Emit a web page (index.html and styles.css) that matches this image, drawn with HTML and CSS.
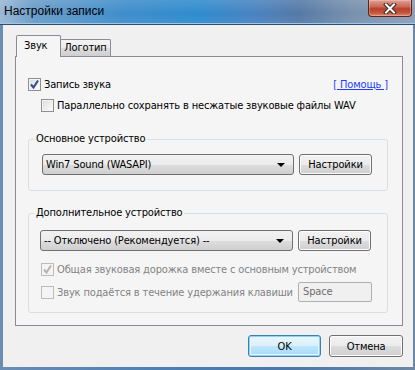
FILE: index.html
```html
<!DOCTYPE html>
<html lang="ru">
<head>
    <meta charset="UTF-8">
    <title>Настройки записи</title>
    <link rel="stylesheet" href="styles.css">
</head>
<body>
    <div class="window">
        <div class="titlebar">
            <span class="title">Настройки записи</span>
            <span class="close-btn">
                <svg width="16" height="11" viewBox="0 0 16 11">
                    <path d="M4 1.5 L12 9.5 M12 1.5 L4 9.5" stroke="#3a2a2a" stroke-width="4" stroke-linecap="square" fill="none"/>
                    <path d="M4 1.5 L12 9.5 M12 1.5 L4 9.5" stroke="#ffffff" stroke-width="2" stroke-linecap="square" fill="none"/>
                </svg>
            </span>
        </div>

        <div class="client">
            <div class="tabs">
                <div class="tab active">Звук</div>
                <div class="tab">Логотип</div>
            </div>

            <div class="panel">
                <div class="row main-row">
                    <label class="check">
                        <span class="cb">
                            <svg width="11" height="11" viewBox="0 0 11 11"><path d="M2 5.5 L4.5 8.5 L9 1.5" stroke="#2a4c8f" stroke-width="2" fill="none"/></svg>
                        </span>
                        Запись звука
                    </label>
                    <a class="help" href="#">[ Помощь ]</a>
                </div>
                <div class="row sub-row">
                    <label class="check"><span class="cb"></span>Параллельно сохранять в несжатые звуковые файлы WAV</label>
                </div>

                <fieldset class="group first">
                    <legend>Основное устройство</legend>
                    <div class="group-body">
                        <div class="combo"><span>Win7 Sound (WASAPI)</span><span class="arrow"></span></div>
                        <button class="btn">Настройки</button>
                    </div>
                </fieldset>

                <fieldset class="group second">
                    <legend>Дополнительное устройство</legend>
                    <div class="group-body">
                        <div class="combo"><span>-- Отключено (Рекомендуется) --</span><span class="arrow"></span></div>
                        <button class="btn">Настройки</button>
                        <label class="check disabled wide">
                            <span class="cb">
                                <svg width="11" height="11" viewBox="0 0 11 11"><path d="M2 5.5 L4.5 8.5 L9 1.5" stroke="#b4b4b4" stroke-width="2" fill="none"/></svg>
                            </span>
                            Общая звуковая дорожка вместе с основным устройством
                        </label>
                        <label class="check disabled"><span class="cb"></span>Звук подаётся в течение удержания клавиши</label>
                        <div class="keybox">Space</div>
                    </div>
                </fieldset>
            </div>

            <div class="footer">
                <button class="btn ok">OK</button>
                <button class="btn cancel">Отмена</button>
            </div>
        </div>
    </div>
</body>
</html>
```

FILE: styles.css
```css
* {
    margin: 0;
    padding: 0;
    box-sizing: border-box;
}

body {
    font-family: 'DejaVu Sans Condensed', 'DejaVu Sans', sans-serif;
    font-stretch: condensed;
    font-size: 11px;
    letter-spacing: -0.15px;
    color: #000;
    background: #6f8fb3;
    width: 415px;
    height: 370px;
    overflow: hidden;
}

.window {
    width: 415px;
    height: 370px;
    display: flex;
    flex-direction: column;
    background: linear-gradient(90deg, #6a8db4 0%, #4d7fb4 40%, #4b78a8 70%, #6e87a4 100%);
}

.titlebar {
    height: 25px;
    display: flex;
    justify-content: space-between;
    align-items: flex-start;
    background:
        linear-gradient(180deg, rgba(255, 255, 255, 0.12) 0%, rgba(255, 255, 255, 0) 55%, rgba(255, 255, 255, 0.06) 100%),
        linear-gradient(90deg, #9bb8d4 0%, #6a9dc9 8%, #3f8dcb 30%, #2f8ccd 48%, #4a82c0 62%, #5579a6 72%, #7890ad 85%, #8c9fb6 100%);
    border-bottom: 1px solid #2f4d6e;
    box-shadow: inset 0 -1px 0 #9cc8ea;
}

.title {
    font-family: 'Liberation Sans', Arial, sans-serif;
    font-stretch: normal;
    letter-spacing: 0;
    font-size: 12px;
    line-height: 23px;
    padding-left: 4px;
}

.close-btn {
    width: 44px;
    height: 17px;
    margin-right: 3px;
    display: flex;
    align-items: center;
    justify-content: center;
    border: 1px solid #5c2520;
    border-top: none;
    border-radius: 0 0 4px 4px;
    background: linear-gradient(180deg, #e0a094 0%, #cc6a58 40%, #b8412c 55%, #c5543c 80%, #dd8a6c 100%);
    box-shadow: inset 0 0 0 1px rgba(255, 255, 255, 0.25);
}

.client {
    flex: 1;
    margin: 0 2px 3px 3px;
    background: #f0f0f0;
    display: flex;
    flex-direction: column;
}

.tabs {
    display: flex;
    align-items: flex-end;
    height: 31px;
    padding-left: 13px;
}

.tab {
    border: 1px solid #898c95;
    border-bottom: none;
    border-radius: 2px 2px 0 0;
    height: 17px;
    line-height: 16px;
    text-align: center;
    width: 51px;
    margin-left: -1px;
    background: linear-gradient(180deg, #f3f3f3 0%, #ebebeb 50%, #dddddd 51%, #cfcfcf 100%);
}

.tab.active {
    position: relative;
    z-index: 1;
    width: 45px;
    height: 22px;
    margin: 0 0 -1px 0;
    line-height: 20px;
    text-align: left;
    padding-left: 7px;
    background: #f5f5f5;
}

.panel {
    width: 388px;
    height: 270px;
    margin-left: 12px;
    border: 1px solid #898c95;
    background: #f5f5f5;
    padding: 19px 14px 0 12px;
}

.row {
    display: flex;
    align-items: center;
    height: 16px;
}

.main-row {
    justify-content: space-between;
}

.sub-row {
    margin-top: 5px;
    padding-left: 13px;
}

.check {
    display: flex;
    align-items: center;
    gap: 3px;
    white-space: nowrap;
}

.check.disabled {
    color: #838383;
}

.cb {
    width: 13px;
    height: 13px;
    border: 1px solid #8e8f8f;
    background: linear-gradient(135deg, #dadada 0%, #f0f0f0 60%, #fdfdfd 100%);
    box-shadow: inset 0 0 0 1px #f4f4f4;
    display: flex;
    align-items: center;
    justify-content: center;
    flex-shrink: 0;
}

.check.disabled .cb {
    border-color: #bcbcbc;
    background: #f4f4f4;
}

.help {
    color: #1f3cff;
    text-decoration: underline;
}

.group {
    border: 1px solid #d5dfe5;
    border-radius: 3px;
    padding: 0;
}

.group legend {
    margin-left: 5px;
    padding: 0 2px;
    line-height: 16px;
}

.first {
    margin-top: 18px;
}

.first .group-body {
    display: flex;
    gap: 5px;
    padding: 7px 0 15px 13px;
}

.second {
    margin-top: 14px;
}

.second .group-body {
    display: grid;
    grid-template-columns: 253px 73px;
    column-gap: 5px;
    align-items: center;
    padding: 9px 0 10px 11px;
}

.combo {
    width: 252px;
    height: 21px;
    border: 1px solid #707070;
    border-radius: 3px;
    background: linear-gradient(180deg, #f2f2f2 0%, #ebebeb 50%, #dddddd 51%, #cfcfcf 100%);
    display: flex;
    align-items: center;
    justify-content: space-between;
    padding: 0 8px 0 3px;
}

.second .combo {
    width: 253px;
}

.arrow {
    width: 0;
    height: 0;
    border-left: 4px solid transparent;
    border-right: 4px solid transparent;
    border-top: 4px solid #000;
}

.btn {
    font-family: inherit;
    font-stretch: inherit;
    letter-spacing: inherit;
    font-size: 11px;
    color: #000;
    width: 73px;
    height: 21px;
    border: 1px solid #707070;
    border-radius: 3px;
    background: linear-gradient(180deg, #f2f2f2 0%, #ebebeb 50%, #dddddd 51%, #cfcfcf 100%);
    box-shadow: inset 0 0 0 1px #fcfcfc;
}

.check.wide {
    grid-column: 1 / 3;
    margin-top: 10px;
    height: 16px;
}

.second .check:not(.wide) {
    margin-top: 5px;
}

.second .check {
    margin-left: 1px;
}

.keybox {
    margin-top: 5px;
    width: 74px;
    height: 20px;
    border: 1px solid #afafaf;
    border-radius: 2px;
    background: #f0f0f0;
    color: #6d6d6d;
    line-height: 18px;
    padding-left: 4px;
}

.footer {
    display: flex;
    justify-content: flex-end;
    gap: 8px;
    padding: 9px 10px 0 0;
}

.footer .btn {
    height: 22px;
}

.btn.ok {
    border-color: #3c7fb1;
    background: linear-gradient(180deg, #eaf6fd 0%, #d9f0fc 50%, #bee6fd 51%, #a7d9f5 100%);
    box-shadow: inset 0 0 0 1px #8ed2f5, inset 0 0 0 2px #e9f5fc;
}

.btn.cancel {
    width: 74px;
}
```
